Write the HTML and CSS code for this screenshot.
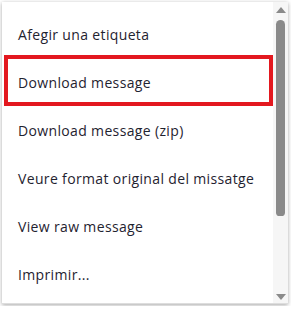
FILE: index.html
```html
<!DOCTYPE html>
<html lang="ca">
<head>
    <meta charset="UTF-8">
    <meta name="viewport" content="width=device-width, initial-scale=1.0">
    <title>Menu</title>
    <link rel="stylesheet" href="styles.css">
</head>
<body>

<div class="menu">
    <ul class="menu-list">
        <li class="menu-item">Afegir una etiqueta</li>
        <li class="menu-item marked">Download message</li>
        <li class="menu-item">Download message (zip)</li>
        <li class="menu-item">Veure format original del missatge</li>
        <li class="menu-item">View raw message</li>
        <li class="menu-item">Imprimir...</li>
    </ul>
    <div class="scrollbar">
        <div class="arrow up"></div>
        <div class="track">
            <div class="thumb"></div>
        </div>
        <div class="arrow down"></div>
    </div>
</div>

</body>
</html>
```

FILE: styles.css
```css
body {
    margin: 0;
    padding: 2px;
    background: #fff;
    font-family: "Open Sans", "Noto Sans", sans-serif;
}

.menu {
    display: flex;
    width: 286px;
    height: 302px;
    background: #fff;
    box-shadow: 0 1px 4px rgba(0, 0, 0, 0.35);
    border-bottom: 1px solid #ddd;
    box-sizing: border-box;
    overflow: hidden;
}

.menu-list {
    flex: 1;
    list-style: none;
    margin: 0;
    padding: 8px 0 0;
}

.menu-item {
    position: relative;
    height: 48px;
    display: flex;
    align-items: center;
    padding-left: 16px;
    font-size: 14px;
    letter-spacing: 0.35px;
    color: #1f2330;
}

.marked::after {
    content: "";
    position: absolute;
    top: -3px;
    bottom: 0;
    left: 2px;
    right: 0;
    border: 4px solid #e3181f;
}

.scrollbar {
    width: 15px;
    background: #f6f6f6;
    display: flex;
    flex-direction: column;
    align-items: center;
}

.arrow {
    width: 0;
    height: 0;
    border-left: 5px solid transparent;
    border-right: 5px solid transparent;
}

.arrow.up {
    margin-top: 5px;
    border-bottom: 6px solid #8a8a8a;
}

.arrow.down {
    margin-bottom: 3px;
    border-top: 6px solid #8a8a8a;
}

.track {
    flex: 1;
    width: 100%;
    display: flex;
    justify-content: center;
    padding-top: 7px;
}

.thumb {
    width: 9px;
    height: 196px;
    background: #8a8a8a;
    border-radius: 5px 5px 4px 4px;
}
```
